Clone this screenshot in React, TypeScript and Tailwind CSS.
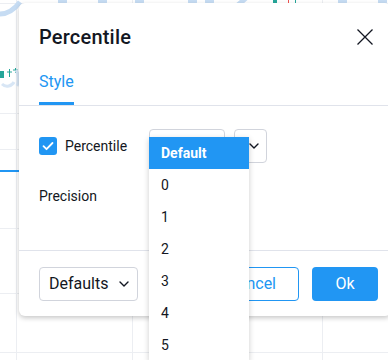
import React from "react";

const Chevron = ({ className = "" }: { className?: string }) => (
  <svg width="10" height="6" viewBox="0 0 10 6" className={className} fill="none">
    <path d="M1 1l4 4 4-4" stroke="#131722" strokeWidth="1.4" strokeLinecap="round" strokeLinejoin="round" />
  </svg>
);

function Background() {
  const blobs = [58, 98, 135, 188, 205, 338, 378];
  return (
    <svg className="absolute inset-0" width="388" height="360" viewBox="0 0 388 360">
      {[16, 132, 322].map((x) => (
        <line key={x} x1={x + 0.5} y1="0" x2={x + 0.5} y2="360" stroke="#eceef2" strokeWidth="1" />
      ))}
      {[3, 113, 149, 228, 293, 352].map((y) => (
        <line key={y} x1="0" y1={y + 0.5} x2="388" y2={y + 0.5} stroke="#eceef2" strokeWidth="1" />
      ))}
      <path d="M0 14 C 8 14, 14 10, 20 2" stroke="#c6dcf3" strokeWidth="5" fill="none" />
      {blobs.map((x) => (
        <rect key={x} x={x} y="-3" width="9" height="8" rx="3" fill="#c6dcf3" />
      ))}
      <path d="M238 5 L246 -2" stroke="#c6dcf3" strokeWidth="5" />
      <rect x="273" y="0" width="4" height="5" fill="#26a69a" />
      <line x1="288.5" y1="0" x2="288.5" y2="6" stroke="#ef5350" />
      <line x1="295.5" y1="0" x2="295.5" y2="5" stroke="#26a69a" />
      <path d="M2 84 C 6 88, 12 86, 14 82" stroke="#d8e6f5" strokeWidth="3" fill="none" />
      <rect x="0" y="71" width="4" height="7" fill="#26a69a" />
      <path d="M7 72 h5 M9.5 69 v8 M13 70 h5 M15.5 68 v5" stroke="#26a69a" strokeWidth="1" />
      <path d="M16 70 C 19 74, 19 82, 17 86" stroke="#d8e6f5" strokeWidth="3" fill="none" />
      <rect x="0" y="170" width="20" height="2" fill="#2196f3" />
    </svg>
  );
}

export default function App() {
  const items = ["Default", "0", "1", "2", "3", "4", "5"];
  return (
    <div
      className="relative w-[388px] h-[360px] overflow-hidden bg-white text-[#131722]"
      style={{ fontFamily: "Roboto, 'Noto Sans', sans-serif" }}
    >
      <Background />

      {/* Dialog */}
      <div className="absolute left-[19px] top-[3px] w-[372px] bg-white rounded-[6px] shadow-[0_2px_5px_rgba(0,0,0,0.22)] flex flex-col">
        <div className="flex items-center justify-between pl-5 pr-[14px] pt-5">
          <div className="text-[20px] leading-[28px] font-medium tracking-[0.2px]">Percentile</div>
          <button className="w-6 h-6 flex items-center justify-center">
            <svg width="18" height="18" viewBox="0 0 18 18" fill="none">
              <path d="M1.5 1.5l15 15M16.5 1.5l-15 15" stroke="#131722" strokeWidth="1.3" />
            </svg>
          </button>
        </div>
        <div className="px-5 pt-[19px] border-b border-[#e0e3eb]">
          <div className="inline-block text-[16px] leading-[24px] text-[#2196f3] pb-2 border-b-[3px] border-[#2196f3]">
            Style
          </div>
        </div>

        <div className="px-5 pt-[23px] pb-[37px] flex flex-col gap-4">
          <div className="flex items-center h-[34px]">
            <div className="w-[110px] flex items-center gap-2">
              <div className="w-[18px] h-[18px] rounded-[3px] bg-[#2196f3] flex items-center justify-center">
                <svg width="12" height="10" viewBox="0 0 12 10" fill="none">
                  <path d="M1.5 5.2l3 3L10.5 2" stroke="white" strokeWidth="1.8" strokeLinecap="round" strokeLinejoin="round" />
                </svg>
              </div>
              <span className="text-[14px]">Percentile</span>
            </div>
            <div className="flex items-center gap-[9px]">
              <div className="w-[76px] h-[34px] border border-[#d1d4dc] rounded-[4px]" />
              <div className="w-[33px] h-[34px] border border-[#d1d4dc] rounded-[4px] flex items-center justify-end pr-[7px]">
                <Chevron />
              </div>
            </div>
          </div>
          <div className="flex items-center h-[34px]">
            <div className="w-[110px] text-[14px]">Precision</div>
            <div className="w-[100px] h-[34px] border border-[#d1d4dc] rounded-[4px]" />
          </div>
        </div>

        <div className="border-t border-[#e0e3eb] pl-5 pr-[13px] pt-4 pb-[15px] flex items-center">
          <div className="w-[99px] h-[34px] border border-[#d1d4dc] rounded-[4px] flex items-center justify-between pl-[9px] pr-[8px] text-[16px]">
            <span>Defaults</span>
            <Chevron />
          </div>
          <div className="ml-auto flex items-center gap-[13px]">
            <button className="h-[34px] px-[22px] border border-[#2196f3] rounded-[4px] text-[16px] text-[#2196f3] bg-white">
              Cancel
            </button>
            <button className="h-[34px] w-[66px] rounded-[4px] text-[16px] text-white bg-[#2196f3]">Ok</button>
          </div>
        </div>
      </div>

      {/* Dropdown menu */}
      <div className="absolute left-[149px] top-[137px] w-[100px] bg-white shadow-[0_2px_6px_rgba(0,0,0,0.2)] flex flex-col">
        {items.map((it, i) => (
          <div
            key={it}
            className={
              i === 0
                ? "h-8 pl-3 flex items-center text-[14px] font-bold text-white bg-[#2196f3]"
                : "h-8 pl-3 flex items-center text-[14px] text-[#131722]"
            }
          >
            {it}
          </div>
        ))}
      </div>
    </div>
  );
}
